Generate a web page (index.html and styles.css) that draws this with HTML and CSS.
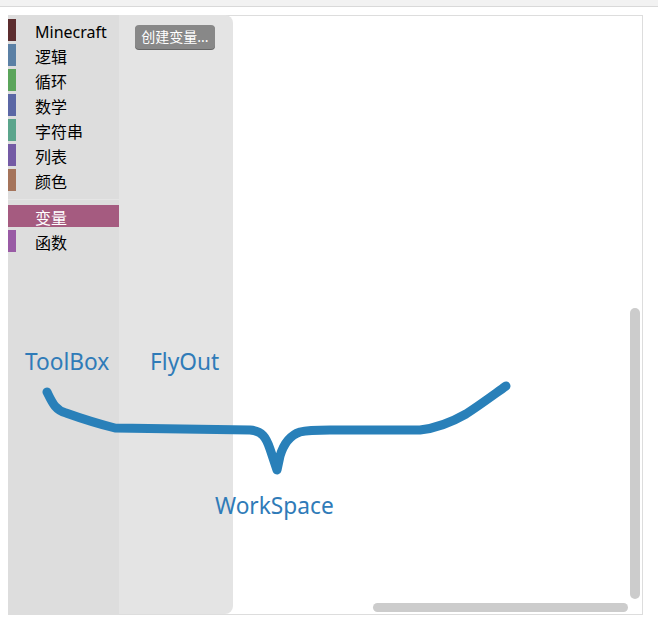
FILE: index.html
```html
<!DOCTYPE html>
<html lang="zh">
<head>
<meta charset="utf-8">
<title>Blockly</title>
<link rel="stylesheet" href="styles.css">
</head>
<body>
<div class="topbar"></div>
<div class="stage">
  <div class="toolbox">
    <div class="row c-mc">Minecraft</div>
    <div class="row c-logic">逻辑</div>
    <div class="row c-loop">循环</div>
    <div class="row c-math">数学</div>
    <div class="row c-text">字符串</div>
    <div class="row c-list">列表</div>
    <div class="row c-colour">颜色</div>
    <div class="sep"></div>
    <div class="row c-var selected">变量</div>
    <div class="row c-proc">函数</div>
  </div>
  <div class="workspace">
    <div class="vscroll"></div>
    <div class="hscroll"></div>
  </div>
  <div class="flyout">
    <div class="btn">创建变量...</div>
  </div>
  <svg class="notes" width="635" height="600" viewBox="8 15 635 600">
    <path d="M47,392 C52,402 55,410 66,413 C80,418 95,423 115,428 L250,430 C262,431 266,437 270,449 L277,470 L280,456 C283,446 288,436 300,432 C308,430 315,430 330,430 L420,430 C438,428 452,422 466,414 C480,405 492,396 506,386" fill="none" stroke="#2980b9" stroke-width="9" stroke-linecap="round" stroke-linejoin="round"/>
  </svg>
  <div class="label l-toolbox">ToolBox</div>
  <div class="label l-flyout">FlyOut</div>
  <div class="label l-workspace">WorkSpace</div>
</div>
</body>
</html>
```
FILE: styles.css
```css
html, body {
  margin: 0;
  padding: 0;
  background: #fff;
}
body {
  font-family: "Noto Sans", "Noto Sans CJK SC", sans-serif;
}
.topbar {
  height: 6px;
  background: #f2f2f2;
  border-bottom: 1px solid #d9d9d9;
}
.stage {
  position: relative;
  margin: 8px 0 0 8px;
  width: 635px;
  height: 600px;
  display: flex;
}
.toolbox {
  width: 111px;
  height: 600px;
  box-sizing: border-box;
  padding-top: 4px;
  background: #ddd;
  display: flex;
  flex-direction: column;
}
.row {
  height: 22px;
  line-height: 26px;
  margin-bottom: 3px;
  border-left: 8px solid #888;
  padding-left: 19px;
  font-size: 16px;
  color: #000;
  white-space: nowrap;
}
.c-mc { border-left-color: #5c2d2f; }
.c-logic { border-left-color: #5b80a5; }
.c-loop { border-left-color: #5ba55b; }
.c-math { border-left-color: #5b67a5; }
.c-text { border-left-color: #5ba58c; }
.c-list { border-left-color: #745ba5; }
.c-colour { border-left-color: #a5745b; }
.c-var { border-left-color: #a55b80; }
.c-proc { border-left-color: #995ba5; }
.row.selected {
  background: #a55b80;
  color: #fff;
}
.sep {
  height: 0;
  border-bottom: 1px solid #e5e5e5;
  margin: 5px 0;
}
.workspace {
  position: relative;
  flex: 1;
  background: #fff;
  border: 1px solid #ddd;
  border-left: none;
}
.vscroll {
  position: absolute;
  right: 2px;
  top: 292px;
  bottom: 15px;
  width: 10px;
  border-radius: 5px;
  background: #ccc;
}
.hscroll {
  position: absolute;
  left: 254px;
  right: 14px;
  bottom: 2px;
  height: 9px;
  border-radius: 5px;
  background: #ccc;
}
.flyout {
  position: absolute;
  left: 111px;
  top: 0;
  width: 114px;
  height: 599px;
  background: #e4e4e4;
  border-radius: 0 8px 8px 0;
  box-sizing: border-box;
  padding: 10px 0 0 16px;
}
.btn {
  width: 80px;
  height: 24px;
  line-height: 24px;
  border-radius: 4px;
  background: #888;
  box-shadow: 0 1px 0 #666;
  color: #fff;
  font-size: 14px;
  text-align: center;
  white-space: nowrap;
}
.notes {
  position: absolute;
  left: 0;
  top: 0;
  pointer-events: none;
}
.label {
  position: absolute;
  font-size: 22.7px;
  line-height: 22px;
  color: #2f7bb8;
  white-space: nowrap;
}
.l-toolbox { left: 17px; top: 336px; }
.l-flyout { left: 142px; top: 336px; }
.l-workspace { left: 207px; top: 480px; }
```
